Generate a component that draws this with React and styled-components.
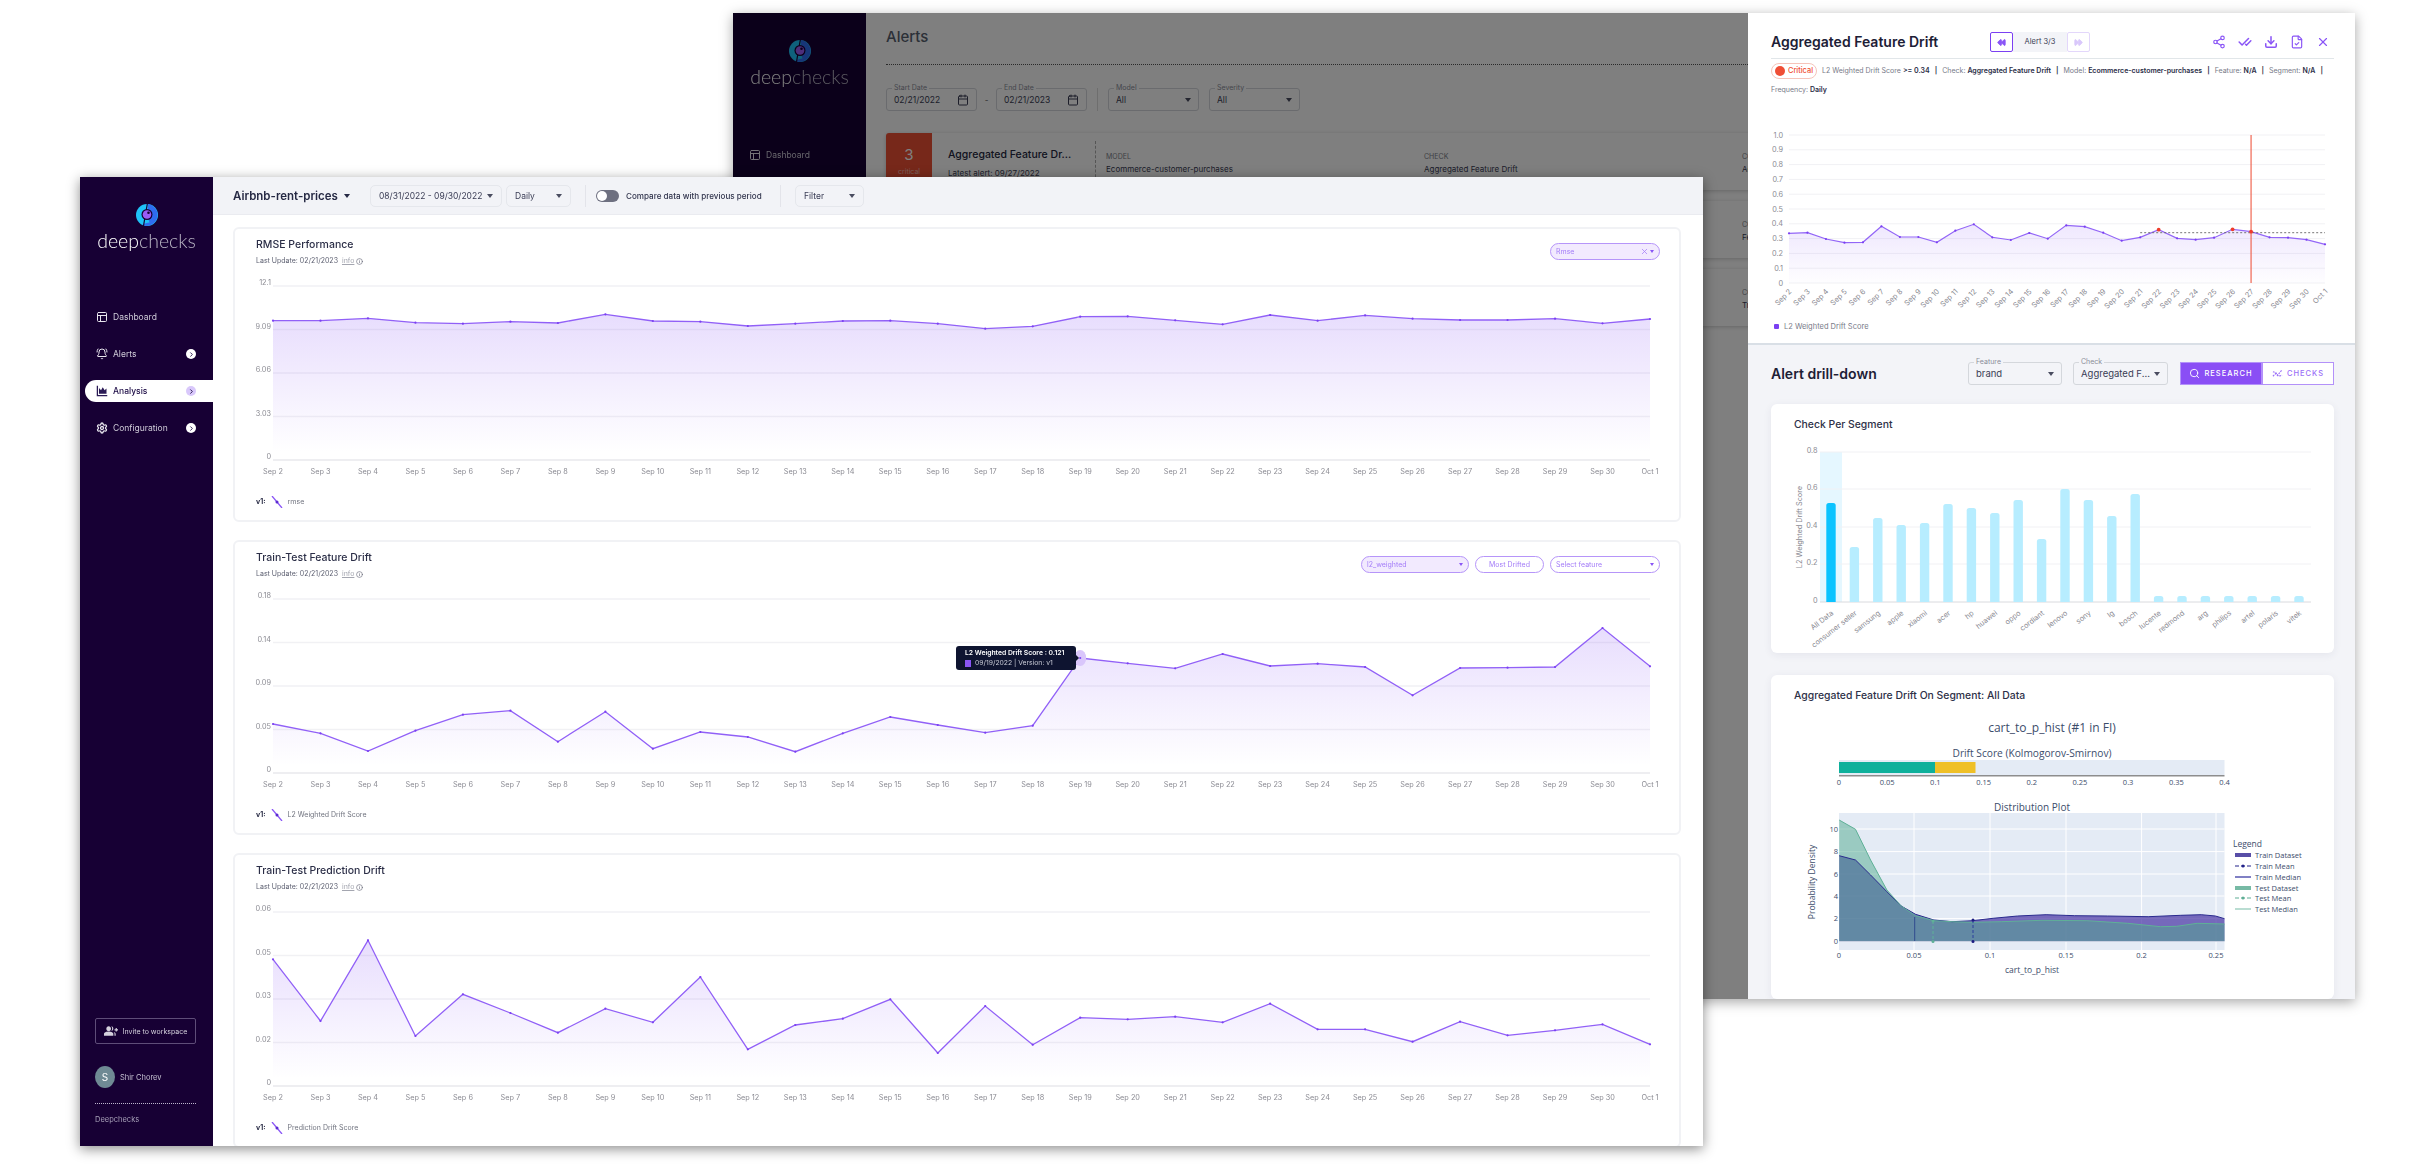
import React from "react";
import styled, { createGlobalStyle } from "styled-components";
import {
  BellRing,
  Calendar,
  CheckCheck,
  ChevronRight,
  Download,
  FastForward,
  FileCheck,
  Info,
  PanelsTopLeft,
  Rewind,
  Search,
  Settings,
  Share2,
  X,
} from "lucide-react";
import { MdGroupAdd } from "react-icons/md";

const PURPLE = "#8a55f6";
const DAYS = Array.from({ length: 29 }, (_, i) => `Sep ${i + 2}`).concat("Oct 1");

// y of each point, in px below the top of the plot
const RMSE = [34.7, 34.7, 32.3, 36.7, 37.7, 35.7, 37, 28.3, 35, 35.7, 40, 37.7, 35, 34.7, 37.7, 42.7, 40.3, 30.7, 30.3, 34.3, 38.3, 29, 34.7, 29.3, 32.7, 34, 34, 32.7, 37.3, 33];
const FEATURE_DRIFT = [125, 134.3, 152, 131.7, 115.7, 111.7, 142.7, 112.7, 149.7, 133, 138, 152.7, 134.3, 118, 126, 133.7, 126.7, 59, 64.3, 69.3, 55, 67, 64.7, 68, 96.3, 69, 68.7, 68, 29, 67.3];
const PREDICTION_DRIFT = [47.3, 109, 28.3, 124, 82.3, 101, 120.7, 96.7, 110.3, 65, 137.3, 113, 106.7, 87.3, 141, 94, 132.7, 105.7, 107.3, 104.7, 110.3, 91.7, 117.3, 117.3, 129.7, 109.7, 123.3, 118.3, 112.3, 132.3];
const ALERT_SERIES = [98.3, 97.7, 104, 107.7, 107.3, 91.3, 102, 102, 107.3, 95.7, 89.3, 102.3, 105, 98, 103.7, 90.3, 91.7, 97.7, 105.7, 102.3, 94.7, 103.3, 104.7, 102.7, 94.3, 96.7, 102.3, 102.7, 104.7, 109.3];

const SEGMENTS = [
  ["All Data", 99], ["consumer seller", 55], ["samsung", 84], ["apple", 77], ["xiaomi", 79], ["acer", 98], ["hp", 94],
  ["huawei", 89], ["oppo", 102], ["cordiant", 63], ["lenovo", 113], ["sony", 102], ["lg", 86], ["bosch", 108],
  ["lucente", 6], ["redmond", 6], ["arg", 6], ["philips", 6], ["artel", 6], ["polaris", 6], ["vitek", 6],
];

const GlobalStyle = createGlobalStyle`
  html, body { margin: 0; background: #fff; }
  * { box-sizing: border-box; }
  body { font-family: Inter, "Liberation Sans", sans-serif; }
`;

const Page = styled.div`
  position: relative;
  width: 2416px;
  height: 1173px;
  overflow: hidden;
  background: #fff;
`;

const BackWindow = styled.div`
  position: absolute;
  left: 733px;
  top: 13px;
  width: 1622px;
  height: 986px;
  display: flex;
  filter: blur(0.4px);
  box-shadow: 0 3px 12px rgba(0, 0, 0, 0.35);
`;

const FrontWindow = styled.div`
  position: absolute;
  left: 80px;
  top: 177px;
  width: 1623px;
  height: 969px;
  display: flex;
  overflow: hidden;
  filter: blur(0.4px);
  box-shadow: 0 3px 12px rgba(0, 0, 0, 0.45);
`;

/* sidebar */
const Side = styled.aside`
  width: 133px;
  flex-shrink: 0;
  height: 100%;
  background: #170034;
  display: flex;
  flex-direction: column;
  align-items: center;
  padding-top: 26px;
`;

const Wordmark = styled.div`
  margin-top: 1px;
  font-family: Lato, sans-serif;
  font-size: 19.5px;
  line-height: 26px;
  font-weight: 300;
  color: #fff;
  span { color: #b9b5c4; }
`;

const Nav = styled.nav`
  align-self: stretch;
  margin-top: ${(p) => p.$top}px;
  padding-left: 5px;
  display: flex;
  flex-direction: column;
  gap: 15px;
`;

const NavItem = styled.div`
  height: 22px;
  padding: 0 17px 0 11px;
  display: flex;
  align-items: center;
  gap: 5px;
  border-radius: 11px 0 0 11px;
  font-size: 8.5px;
  color: ${(p) => (p.$active ? "#1b0a44" : "#cfcbd8")};
  background: ${(p) => (p.$active ? "#fff" : "transparent")};
  font-weight: ${(p) => (p.$active ? 500 : 400)};
  svg.main { color: ${(p) => (p.$active ? "#2a1a55" : "#e8e6ee")}; flex-shrink: 0; }
`;

const NavLabel = styled.span`
  flex: 1;
`;

const Chevron = styled.span`
  width: 10px;
  height: 10px;
  border-radius: 50%;
  display: flex;
  align-items: center;
  justify-content: center;
  color: #1b0a44;
  background: ${(p) => (p.$active ? "#d9c8fb" : "#fff")};
`;

const SideFoot = styled.div`
  margin-top: auto;
  align-self: stretch;
  padding: 0 17px 22px 15px;
`;

const InviteButton = styled.div`
  height: 26px;
  display: flex;
  align-items: center;
  justify-content: center;
  gap: 5px;
  border: 1px solid #5e4d78;
  border-radius: 2px;
  color: #d6d2de;
  font-size: 7px;
`;

const UserRow = styled.div`
  margin-top: 22px;
  display: flex;
  align-items: center;
  gap: 5px;
  font-size: 7.5px;
  color: #c4bfd0;
`;

const Avatar = styled.div`
  width: 20px;
  height: 22px;
  border-radius: 50%;
  background: #6f8a94;
  color: #fff;
  font-size: 10px;
  display: flex;
  align-items: center;
  justify-content: center;
`;

const Org = styled.div`
  margin-top: 15px;
  padding-top: 11px;
  border-top: 1px dotted #bdb6cc;
  font-size: 7.5px;
  color: #a79fb8;
`;

const Logo = () => (
  <svg width="24" height="24" viewBox="0 0 24 24">
    <circle cx="12" cy="12" r="11" fill="#1fc3f8" />
    <path d="M13 1.1A11 11 0 0 1 12 23c-2 0-3.4-.5-4.6-1.2C10 20 12 20 14.5 19.5L13 15z" fill="#2f6cf0" />
    <path d="M12.5 0 L10 14 L8.5 23" stroke="#170034" strokeWidth="1.2" fill="none" />
    <circle cx="12" cy="11.5" r="5.5" fill="#170034" />
    <circle cx="12" cy="11.5" r="4.3" fill="#9a5cf7" />
    <circle cx="13.5" cy="9.8" r="1.3" fill="#170034" />
  </svg>
);

const AnalysisIcon = () => (
  <svg className="main" width="12" height="12" viewBox="0 0 16 16" fill="currentColor">
    <path d="M1 1v14h14v-1.700H2.700V1z" />
    <path d="M4 11.500V4l2.700 3L9 3l2.500 4L14 4.500v7z" />
  </svg>
);

const Sidebar = ({ navTop = 52, full = true }) => (
  <Side>
    <Logo />
    <Wordmark>
      deep<span>checks</span>
    </Wordmark>
    <Nav $top={navTop}>
      <NavItem>
        <PanelsTopLeft className="main" size={12} />
        <NavLabel>Dashboard</NavLabel>
      </NavItem>
      <NavItem>
        <BellRing className="main" size={12} />
        <NavLabel>Alerts</NavLabel>
        <Chevron><ChevronRight size={7} strokeWidth={3} /></Chevron>
      </NavItem>
      <NavItem $active>
        <AnalysisIcon />
        <NavLabel>Analysis</NavLabel>
        <Chevron $active><ChevronRight size={7} strokeWidth={3} /></Chevron>
      </NavItem>
      <NavItem>
        <Settings className="main" size={12} strokeWidth={2.6} />
        <NavLabel>Configuration</NavLabel>
        <Chevron><ChevronRight size={7} strokeWidth={3} /></Chevron>
      </NavItem>
    </Nav>
    {full && (
      <SideFoot>
        <InviteButton>
          <MdGroupAdd size={14} />
          Invite to workspace
        </InviteButton>
        <UserRow>
          <Avatar>S</Avatar>
          Shir Chorev
        </UserRow>
        <Org>Deepchecks</Org>
      </SideFoot>
    )}
  </Side>
);

/* alerts page behind the drawer */
const AlertsApp = styled.div`
  position: relative;
  flex: 1;
  display: flex;
  overflow: hidden;
`;

const Dim = styled.div`
  position: absolute;
  inset: 0;
  background: rgba(0, 0, 0, 0.5);
`;

const AlertsMain = styled.main`
  flex: 1;
  min-width: 0;
  background: #fff;
  padding-left: 20px;
  overflow: hidden;
`;

const AlertsTitle = styled.h1`
  margin: 0;
  height: 52px;
  padding-top: 14px;
  font-size: 15px;
  line-height: 20px;
  font-weight: 500;
  color: #57606f;
  border-bottom: 1px dotted #555;
`;

const AlertsFilters = styled.div`
  margin-top: 23px;
  height: 23px;
  display: flex;
  align-items: center;
`;

const Outlined = styled.div`
  position: relative;
  width: ${(p) => p.$w}px;
  height: 23px;
  margin-left: ${(p) => p.$ml || 0}px;
  padding: 0 7px;
  display: flex;
  align-items: center;
  justify-content: space-between;
  border: 1.5px solid #d4d7dc;
  border-radius: 3px;
  font-size: ${(p) => p.$fs || 8.5}px;
  color: #3a3d55;
`;

const Notch = styled.label`
  position: absolute;
  left: 5px;
  top: -6px;
  padding: 0 2px;
  font-size: 7px;
  line-height: 9px;
  color: #8a8d99;
  background: ${(p) => p.$bg || "#fff"};
`;

const Caret = styled.i`
  width: 0;
  height: 0;
  flex-shrink: 0;
  border-left: ${(p) => p.$s || 3}px solid transparent;
  border-right: ${(p) => p.$s || 3}px solid transparent;
  border-top: ${(p) => (p.$s || 3) + 1}px solid ${(p) => p.$c || "#4a4d60"};
`;

const FilterDash = styled.span`
  margin: 0 6px;
  width: 7px;
  text-align: center;
  font-size: 8px;
  color: #555;
`;

const FilterRule = styled.span`
  width: 1px;
  height: 23px;
  margin: 0 10px;
  background: #ddd;
`;

const AlertRows = styled.div`
  margin-top: 22px;
  display: flex;
  flex-direction: column;
  gap: 11px;
`;

const AlertRow = styled.div`
  width: 1200px;
  height: 57px;
  display: grid;
  grid-template-columns: 46px 164px 318px 318px 318px;
  border-radius: 3px;
  background: #fff;
  box-shadow: 0 1px 4px rgba(0, 0, 0, 0.2);
`;

const SeverityBlock = styled.div`
  background: #ee5035;
  color: #fff;
  border-radius: 3px 0 0 3px;
  display: flex;
  flex-direction: column;
  align-items: center;
  padding-top: 12px;
  font-size: 15px;
  line-height: 20px;
  small { margin-top: 1px; font-size: 7px; line-height: 12px; color: #f6bcb1; }
`;

const RowTitle = styled.div`
  margin: 8px 0;
  padding: 4px 0 0 16px;
  border-right: 1px dashed #aaa;
  font-size: 10.5px;
  line-height: 20px;
  font-weight: 500;
  white-space: nowrap;
  color: #24273f;
  small { display: block; margin-top: 2px; font-size: 8px; line-height: 12px; font-weight: 400; color: #3a3d55; }
`;

const RowCell = styled.div`
  padding: 18px 0 0 10px;
  font-size: 8px;
  line-height: 12px;
  color: #3a3d55;
  small { display: block; font-size: 7px; color: #7b7e8a; }
`;

const ALERT_ROWS = ["Aggregated Feature Drift", "Feature Drift", "Train-Test Drift"];

const AlertsBehind = () => (
  <AlertsApp>
    <Sidebar navTop={54} full={false} />
    <AlertsMain>
      <AlertsTitle>Alerts</AlertsTitle>
      <AlertsFilters>
        <Outlined $w={91}>
          <Notch>Start Date</Notch>
          02/21/2022
          <Calendar size={12} />
        </Outlined>
        <FilterDash>-</FilterDash>
        <Outlined $w={91}>
          <Notch>End Date</Notch>
          02/21/2023
          <Calendar size={12} />
        </Outlined>
        <FilterRule />
        <Outlined $w={91}>
          <Notch>Model</Notch>
          All
          <Caret />
        </Outlined>
        <Outlined $w={91} $ml={10}>
          <Notch>Severity</Notch>
          All
          <Caret />
        </Outlined>
      </AlertsFilters>
      <AlertRows>
        {ALERT_ROWS.map((check, i) => (
          <AlertRow key={i}>
            <SeverityBlock>
              3<small>critical</small>
            </SeverityBlock>
            <RowTitle>
              Aggregated Feature Dr...
              <small>Latest alert: 09/27/2022</small>
            </RowTitle>
            <RowCell>
              <small>MODEL</small>
              Ecommerce-customer-purchases
            </RowCell>
            <RowCell>
              <small>CHECK</small>
              Aggregated Feature Drift
            </RowCell>
            <RowCell>
              <small>CONDITION</small>
              {check}
            </RowCell>
          </AlertRow>
        ))}
      </AlertRows>
    </AlertsMain>
    <Dim />
  </AlertsApp>
);

/* drawer */
const Drawer = styled.section`
  width: 607px;
  flex-shrink: 0;
  height: 100%;
  overflow: hidden;
  display: flex;
  flex-direction: column;
  background: #f3f4f8;
`;

const DrawerTop = styled.div`
  height: 332px;
  flex-shrink: 0;
  padding: 19px 21px 0 23px;
  background: #fff;
  border-bottom: 2px solid #d9dfe6;
`;

const DrawerHead = styled.div`
  display: grid;
  grid-template-columns: 219px auto 1fr;
  align-items: center;
  padding-bottom: 6px;
  border-bottom: 1.5px solid #e1e6e9;
`;

const DrawerTitle = styled.h2`
  margin: 0;
  font-size: 14px;
  line-height: 20px;
  font-weight: 600;
  white-space: nowrap;
  color: #1d2036;
`;

const Pager = styled.div`
  display: flex;
  height: 20px;
`;

const PagerButton = styled.div`
  width: 23px;
  display: flex;
  align-items: center;
  justify-content: center;
  border: 1.5px solid ${(p) => (p.$on ? "#7b40f2" : "#e3d7fb")};
  border-radius: 2px;
  color: ${(p) => (p.$on ? "#8a55f6" : "#d9c8fb")};
`;

const PagerLabel = styled.div`
  width: 54px;
  text-align: center;
  font-size: 7.5px;
  line-height: 20px;
  color: #3a3d55;
  background: #f3f4f8;
`;

const DrawerTools = styled.div`
  justify-self: end;
  padding-right: 4px;
  display: flex;
  gap: 12px;
  color: ${PURPLE};
`;

const InfoLine = styled.div`
  margin-top: 4px;
  display: flex;
  flex-wrap: wrap;
  align-items: center;
  column-gap: 5px;
  font-size: 7px;
  line-height: 16px;
  white-space: nowrap;
  color: #777a88;
  b { font-weight: 600; color: #2b2e47; }
`;

const CriticalPill = styled.span`
  height: 16px;
  display: flex;
  align-items: center;
  gap: 3px;
  padding: 0 3px;
  border: 1px solid #f6c4ba;
  border-radius: 8px;
  color: #ef4e35;
  font-size: 7.4px;
  font-weight: 500;
`;

const CriticalDot = styled.i`
  width: 10px;
  height: 10px;
  border-radius: 50%;
  background: #ef4e35;
`;

const Pipe = styled.span`
  color: #2b2e47;
  font-weight: 600;
`;

const Break = styled.span`
  flex-basis: 100%;
  height: 3px;
`;

const AlertLegend = styled.div`
  margin-top: 10px;
  display: flex;
  align-items: center;
  gap: 5px;
  padding-left: 3px;
  font-size: 7.5px;
  color: #777a88;
`;

const AlertLegendDot = styled.i`
  width: 5px;
  height: 5px;
  border-radius: 1px;
  background: #7b40f2;
`;

const DrawerBody = styled.div`
  flex: 1;
  min-height: 0;
  padding: 17px 21px 0 23px;
`;

const DrillHead = styled.div`
  display: flex;
  align-items: center;
  height: 23px;
`;

const DrillTitle = styled.h3`
  margin: 0;
  flex: 1;
  font-size: 14px;
  font-weight: 600;
  color: #1d2036;
`;

const Segmented = styled.div`
  margin-left: 12px;
  display: flex;
  height: 23px;
  width: 154px;
`;

const SegButton = styled.div`
  flex: ${(p) => (p.$on ? "0 0 82px" : 1)};
  display: flex;
  align-items: center;
  justify-content: center;
  gap: 4px;
  font-size: 7.5px;
  font-weight: 500;
  letter-spacing: 1px;
  color: ${(p) => (p.$on ? "#fff" : "#9a6ef7")};
  background: ${(p) => (p.$on ? "#8a4ef5" : "#fff")};
  border: 1px solid #b391f9;
`;

const PanelCard = styled.div`
  margin-top: ${(p) => p.$mt}px;
  padding-top: 14px;
  background: #fff;
  border-radius: 6px;
  box-shadow: 0 2px 8px rgba(40, 40, 80, 0.07);
`;

const PanelTitle = styled.h4`
  margin: 0 0 3px 23px;
  font-size: 10.4px;
  line-height: 14px;
  font-weight: 500;
  color: #2d3047;
`;

const Svg = styled.svg`
  display: block;
  overflow: visible;
`;

const ChartSpacer = styled.div`
  height: 22px;
`;

const GridLine = styled.line`
  stroke: ${(p) => p.$c || "#f1f1f4"};
  stroke-width: ${(p) => p.$w || 1.3};
`;

const Tick = styled.text`
  font-family: Inter, sans-serif;
  font-size: 7.3px;
  fill: #8b8b93;
`;

const PlotText = styled.text`
  font-family: "Open Sans", sans-serif;
  font-size: ${(p) => p.$fs || 7.5}px;
  fill: #3c4d6b;
`;

const linePath = (ys, x0, step) => ys.map((y, i) => `${i ? "L" : "M"}${(x0 + i * step).toFixed(1)} ${y}`).join(" ");

const AlertChart = () => {
  const x0 = 18;
  const step = 536 / 29;
  const top = 15;
  const h = 148;
  const ys = ALERT_SERIES.map((y) => y + top);
  return (
    <Svg width="563" height="192">
      <defs>
        <linearGradient id="alertFill" x1="0" y1="0" x2="0" y2="1">
          <stop offset="0" stopColor="#8a55f6" stopOpacity="0.14" />
          <stop offset="1" stopColor="#8a55f6" stopOpacity="0.01" />
        </linearGradient>
      </defs>
      {Array.from({ length: 11 }, (_, i) => {
        const y = top + (h * i) / 10;
        return (
          <g key={i}>
            <GridLine x1={x0} x2={x0 + 536} y1={y} y2={y} $w={1} />
            <Tick x={x0 - 6} y={y + 2.5} textAnchor="end">
              {i === 10 ? "0" : (1 - i / 10).toFixed(1)}
            </Tick>
          </g>
        );
      })}
      <path d={`${linePath(ys, x0, step)} L${x0 + 536} ${top + h} L${x0} ${top + h} Z`} fill="url(#alertFill)" />
      <path d={linePath(ys, x0, step)} fill="none" stroke="#9366f7" strokeWidth="1.2" />
      <line x1={x0 + 19 * step} x2={x0 + 536} y1={top + 97.7} y2={top + 97.7} stroke="#666" strokeWidth="0.9" strokeDasharray="2 2" />
      <line x1={x0 + 25 * step} x2={x0 + 25 * step} y1={top} y2={top + h} stroke="#ef5a43" strokeWidth="1.1" />
      {ys.map((y, i) =>
        [20, 24, 25].includes(i) ? (
          <circle key={i} cx={x0 + i * step} cy={y} r="1.9" fill="#ef3b2a" />
        ) : (
          <circle key={i} cx={x0 + i * step} cy={y} r="1.1" fill="#7b40f2" />
        )
      )}
      {DAYS.map((d, i) => (
        <Tick key={d} x={x0 + i * step + 3} y={top + h + 9} textAnchor="end" transform={`rotate(-45 ${x0 + i * step + 3} ${top + h + 9})`}>
          {d}
        </Tick>
      ))}
    </Svg>
  );
};

const SegmentChart = () => {
  const base = 602;
  const ticks = [[452, "0.8"], [489, "0.6"], [527, "0.4"], [564, "0.2"], [602, "0"]];
  return (
    <Svg width="563" height="218" viewBox="1771 435 563 218">
      <rect x="1820" y="452" width="22" height="150" fill="#e5f7ff" />
      {ticks.map(([y, label]) => (
        <g key={label}>
          <GridLine x1="1820" x2="2311" y1={y} y2={y} $w={1} $c={label === "0" ? "#d9dade" : "#f1f1f4"} />
          <Tick x="1817.5" y={y + 1} textAnchor="end">{label}</Tick>
        </g>
      ))}
      <Tick x="1802" y="527" textAnchor="middle" transform="rotate(-90 1802 527)">L2 Weighted Drift Score</Tick>
      {SEGMENTS.map(([name, height], i) => {
        const x = 1831 + i * 23.4;
        return (
          <g key={name}>
            <path
              d={`M${x - 4.7} ${base} v${-(height - 2.5)} q0 -2.5 2.5 -2.5 h4.4 q2.5 0 2.5 2.5 v${height - 2.5} z`}
              fill={i === 0 ? "#0cc3ff" : "#b7edff"}
            />
            <Tick x={x + 3} y={base + 12} textAnchor="end" transform={`rotate(-38 ${x + 3} ${base + 12})`}>{name}</Tick>
          </g>
        );
      })}
    </Svg>
  );
};

// curves read off the plot, [x, y] in a frame of 2.45 x 3 per page px
const pt = ([x, y]) => `${(1740 + x / 2.45).toFixed(1)} ${(670 + y / 3).toFixed(1)}`;
const TRAIN = [[243, 557], [283, 570], [320, 615], [360, 665], [395, 708], [430, 733], [475, 750], [520, 755], [570, 752], [620, 745], [680, 738], [750, 734], [820, 737], [900, 738], [1000, 740], [1080, 736], [1130, 734], [1165, 738], [1187, 746]];
const TEST = [[243, 450], [283, 478], [320, 570], [360, 660], [395, 708], [430, 737], [475, 752], [520, 755], [570, 757], [640, 755], [740, 751], [850, 752], [950, 760], [1030, 770], [1070, 769], [1120, 760], [1187, 762]];
const curve = (list) => list.map((p, i) => `${i ? "L" : "M"}${pt(p)}`).join(" ");
const closed = (list) => `${curve(list)} L${pt([1187, 814])} L${pt([243, 814])} Z`;

const LEGEND_ROWS = [
  ["Train Dataset", 855, "band", "#3b2f98"],
  ["Train Mean", 866, "dash", "#23238a"],
  ["Train Median", 877, "line", "#2b2a9c"],
  ["Test Dataset", 888, "band", "#5fae95"],
  ["Test Mean", 898, "dash", "#5fae95"],
  ["Test Median", 909, "line", "#8cc7b4"],
];

const DriftPlot = () => (
  <Svg width="563" height="293" viewBox="1771 706 563 293">
    <PlotText x="2052" y="732" textAnchor="middle" $fs={12}>cart_to_p_hist (#1 in FI)</PlotText>
    <PlotText x="2032" y="757" textAnchor="middle" $fs={10.2}>Drift Score (Kolmogorov-Smirnov)</PlotText>
    <rect x="1839" y="760" width="385.5" height="15" fill="#e4ebf5" />
    <rect x="1839" y="762" width="96" height="11" fill="#0eb09b" />
    <rect x="1935" y="762" width="40.5" height="11" fill="#efc027" />
    <rect x="1839" y="775" width="385.5" height="1.5" fill="#8d8d8d" />
    {["0", "0.05", "0.1", "0.15", "0.2", "0.25", "0.3", "0.35", "0.4"].map((t, i) => (
      <PlotText key={t} x={1839 + i * 48.19} y="785" textAnchor="middle">{t}</PlotText>
    ))}
    <PlotText x="2032" y="811" textAnchor="middle" $fs={10}>Distribution Plot</PlotText>
    <rect x="1839" y="813" width="385.5" height="137" fill="#e4ebf5" />
    {[829, 851.6, 874, 896, 918.6, 941.3].map((y) => (
      <line key={y} x1="1839" x2="2224.5" y1={y} y2={y} stroke="#fff" strokeWidth="1" />
    ))}
    {[1914, 1990, 2066, 2141.6, 2216].map((x) => (
      <line key={x} x1={x} x2={x} y1="813" y2="950" stroke="#fff" strokeWidth="1" />
    ))}
    <path d={closed(TRAIN)} fill="#4a36a5" fillOpacity="0.72" />
    <path d={closed(TEST)} fill="#4fa98d" fillOpacity="0.5" />
    <path d={curve(TRAIN)} fill="none" stroke="#2a2a8e" strokeWidth="1" />
    <path d={curve(TEST)} fill="none" stroke="#5fb197" strokeWidth="1" />
    <line x1="1914.7" x2="1914.7" y1="917" y2="941" stroke="#2f4a8e" strokeWidth="1" />
    <line x1="1933" x2="1933" y1="921" y2="941" stroke="#5fb197" strokeWidth="1" strokeDasharray="3 2" />
    <circle cx="1933" cy="921" r="1.5" fill="#5fb197" />
    <circle cx="1933" cy="941.5" r="1.5" fill="#5fb197" />
    <line x1="1973" x2="1973" y1="920" y2="941" stroke="#2a3f9e" strokeWidth="1" strokeDasharray="3 2" />
    <circle cx="1973" cy="920" r="1.5" fill="#1c1c80" />
    <circle cx="1973" cy="941.5" r="1.5" fill="#1c1c80" />
    {[["10", 829], ["8", 851.6], ["6", 874], ["4", 896], ["2", 918.6], ["0", 941.3]].map(([t, y]) => (
      <PlotText key={t} x="1838" y={y + 2.5} textAnchor="end">{t}</PlotText>
    ))}
    {[["0", 1839], ["0.05", 1914], ["0.1", 1990], ["0.15", 2066], ["0.2", 2141.6], ["0.25", 2216]].map(([t, x]) => (
      <PlotText key={t} x={x} y="958" textAnchor="middle">{t}</PlotText>
    ))}
    <PlotText x="2032" y="973" textAnchor="middle" $fs={8.5}>cart_to_p_hist</PlotText>
    <PlotText x="1815" y="882" textAnchor="middle" $fs={8.5} transform="rotate(-90 1815 882)">Probability Density</PlotText>
    <PlotText x="2233" y="847" $fs={8.5}>Legend</PlotText>
    {LEGEND_ROWS.map(([label, y, kind, color]) => (
      <g key={label}>
        {kind === "band" && <rect x="2235" y={y - 2} width="16" height="4" fill={color} fillOpacity="0.85" />}
        {kind === "line" && <line x1="2235" x2="2251" y1={y} y2={y} stroke={color} strokeWidth="1.2" />}
        {kind === "dash" && (
          <>
            <line x1="2235" x2="2251" y1={y} y2={y} stroke={color} strokeWidth="1.2" strokeDasharray="4 2" />
            <circle cx="2243" cy={y} r="1.5" fill={color} />
          </>
        )}
        <PlotText x="2255" y={y + 2.5}>{label}</PlotText>
      </g>
    ))}
  </Svg>
);

const AlertDrawer = () => (
  <Drawer>
    <DrawerTop>
      <DrawerHead>
        <DrawerTitle>Aggregated Feature Drift</DrawerTitle>
        <Pager>
          <PagerButton $on><Rewind size={9} fill="currentColor" /></PagerButton>
          <PagerLabel>Alert 3/3</PagerLabel>
          <PagerButton><FastForward size={9} fill="currentColor" /></PagerButton>
        </Pager>
        <DrawerTools>
          <Share2 size={14} />
          <CheckCheck size={14} strokeWidth={2.6} />
          <Download size={14} strokeWidth={2.6} />
          <FileCheck size={14} />
          <X size={14} />
        </DrawerTools>
      </DrawerHead>
      <InfoLine>
        <CriticalPill><CriticalDot />Critical</CriticalPill>
        <span>L2 Weighted Drift Score <b>&gt;= 0.34</b></span>
        <Pipe>|</Pipe>
        <span>Check: <b>Aggregated Feature Drift</b></span>
        <Pipe>|</Pipe>
        <span>Model: <b>Ecommerce-customer-purchases</b></span>
        <Pipe>|</Pipe>
        <span>Feature: <b>N/A</b></span>
        <Pipe>|</Pipe>
        <span>Segment: <b>N/A</b></span>
        <Pipe>|</Pipe>
        <Break />
        <span>Frequency: <b>Daily</b></span>
      </InfoLine>
      <ChartSpacer />
      <AlertChart />
      <AlertLegend><AlertLegendDot />L2 Weighted Drift Score</AlertLegend>
    </DrawerTop>
    <DrawerBody>
      <DrillHead>
        <DrillTitle>Alert drill-down</DrillTitle>
        <Outlined $w={94} $fs={9.5}>
          <Notch $bg="#f3f4f8">Feature</Notch>
          brand
          <Caret />
        </Outlined>
        <Outlined $w={95} $ml={11} $fs={9.5}>
          <Notch $bg="#f3f4f8">Check</Notch>
          Aggregated F...
          <Caret />
        </Outlined>
        <Segmented>
          <SegButton $on><Search size={11} />RESEARCH</SegButton>
          <SegButton>
            <svg width="11" height="11" viewBox="0 0 12 12" fill="none" stroke="currentColor" strokeWidth="1.2" strokeDasharray="2 1">
              <path d="M1 9l3-3 2 2 5-6" />
              <path d="M1 4l3 1 3 4 4-1" />
            </svg>
            CHECKS
          </SegButton>
        </Segmented>
      </DrillHead>
      <PanelCard $mt={19}>
        <PanelTitle>Check Per Segment</PanelTitle>
        <SegmentChart />
      </PanelCard>
      <PanelCard $mt={22}>
        <PanelTitle>Aggregated Feature Drift On Segment: All Data</PanelTitle>
        <DriftPlot />
      </PanelCard>
    </DrawerBody>
  </Drawer>
);

/* analysis page in front */
const AnalysisMain = styled.main`
  flex: 1;
  min-width: 0;
  display: flex;
  flex-direction: column;
  background: #fff;
`;

const TopBar = styled.header`
  height: 38px;
  flex-shrink: 0;
  padding-left: 20px;
  display: flex;
  align-items: center;
  background: #f2f3f7;
  border-bottom: 1px solid #eaebf0;
`;

const ModelName = styled.div`
  width: 137px;
  display: flex;
  align-items: center;
  gap: 6px;
  font-size: 11.5px;
  font-weight: 600;
  color: #262944;
`;

const BarSelect = styled.div`
  width: ${(p) => p.$w}px;
  height: 22px;
  margin-left: ${(p) => p.$ml || 0}px;
  padding: 0 8px;
  display: flex;
  align-items: center;
  justify-content: space-between;
  border: 1px solid #e5e7ec;
  border-radius: 5px;
  font-size: 8.5px;
  color: #3a3d55;
`;

const BarRule = styled.span`
  width: 1px;
  height: 22px;
  margin: 0 ${(p) => p.$r}px 0 ${(p) => p.$l}px;
  background: #e3e4ea;
`;

const Toggle = styled.div`
  position: relative;
  width: 23px;
  height: 12px;
  border-radius: 6px;
  background: #6e7080;
`;

const Knob = styled.i`
  position: absolute;
  left: 1px;
  top: 1px;
  width: 10px;
  height: 10px;
  border-radius: 50%;
  background: #fff;
`;

const CompareLabel = styled.span`
  margin-left: 7px;
  width: 137px;
  font-size: 8.1px;
  font-weight: 500;
  white-space: nowrap;
  color: #30334c;
`;

const Cards = styled.div`
  padding: 12px 22px 0 20px;
  display: flex;
  flex-direction: column;
  gap: 18px;
`;

const MetricCard = styled.article`
  height: 295px;
  flex-shrink: 0;
  padding: 8px 19px 0 21px;
  border: 2px solid #f1f2f5;
  border-radius: 6px;
`;

const CardHead = styled.div`
  display: flex;
  justify-content: space-between;
  align-items: flex-start;
  height: 31px;
`;

const CardTitle = styled.h3`
  margin: 0;
  font-size: 10.5px;
  line-height: 16px;
  font-weight: 500;
  color: #2b2e47;
`;

const CardSub = styled.div`
  margin-top: 1px;
  display: flex;
  align-items: center;
  gap: 4px;
  font-size: 7px;
  line-height: 14px;
  color: #5e6172;
  u { color: #a4a6b0; margin-right: -2px; }
`;

const CardControls = styled.div`
  margin-top: 6px;
  display: flex;
  gap: 6px;
`;

const PillSelect = styled.div`
  width: ${(p) => p.$w}px;
  height: 17px;
  padding: 0 5px;
  display: flex;
  align-items: center;
  justify-content: ${(p) => (p.$center ? "center" : "space-between")};
  border: 1.5px solid #b695f9;
  border-radius: 9px;
  font-size: 7px;
  color: #a47df8;
  background: ${(p) => (p.$filled ? "#f2eafe" : "#fff")};
`;

const ClearRow = styled.span`
  display: flex;
  align-items: center;
  gap: 1px;
`;

const ChartBox = styled.div`
  position: relative;
`;

const Tooltip = styled.div`
  position: absolute;
  left: 700px;
  top: 65px;
  width: 120px;
  height: 24px;
  padding: 2px 5px 0 9px;
  border-radius: 3px;
  background: #0e1430;
  color: #fff;
  font-size: 6.8px;
  line-height: 10px;
  font-weight: 600;
  white-space: nowrap;
  &::after {
    content: "";
    position: absolute;
    right: -3px;
    top: 9px;
    border-top: 3px solid transparent;
    border-bottom: 3px solid transparent;
    border-left: 3px solid #0e1430;
  }
`;

const TooltipRow = styled.div`
  display: flex;
  align-items: center;
  gap: 4px;
  font-weight: 400;
  color: #c9cbd6;
  i { width: 6px; height: 7px; background: #8a55f6; }
`;

const Legend = styled.div`
  margin-top: 13px;
  display: flex;
  align-items: center;
  gap: 5px;
  font-size: 7px;
  line-height: 14px;
  color: #70737f;
  b { font-weight: 700; color: #2b2e47; }
`;

const AreaChart = ({ id, ticks, data, hover }) => {
  const x0 = 17;
  const w = 1377;
  const top = 18;
  const h = 174;
  const step = w / 29;
  const ys = data.map((y) => y + top);
  return (
    <Svg width="1410" height="214">
      <defs>
        <linearGradient id={id} x1="0" y1="0" x2="0" y2="1">
          <stop offset="0" stopColor="#8a55f6" stopOpacity="0.2" />
          <stop offset="0.95" stopColor="#8a55f6" stopOpacity="0" />
        </linearGradient>
      </defs>
      {ticks.map((label, i) => {
        const y = top + (h * i) / (ticks.length - 1);
        return (
          <g key={label}>
            <GridLine x1={x0} x2={x0 + w} y1={y} y2={y} $c={i === ticks.length - 1 ? "#e9e9ed" : "#f1f1f4"} />
            <Tick x={x0 - 2} y={y - 1} textAnchor="end">{label}</Tick>
          </g>
        );
      })}
      <path d={`${linePath(ys, x0, step)} L${x0 + w} ${top + h} L${x0} ${top + h} Z`} fill={`url(#${id})`} />
      <path d={linePath(ys, x0, step)} fill="none" stroke="#9160f7" strokeWidth="1.3" />
      {hover != null && <ellipse cx={x0 + hover * step} cy={ys[hover]} rx="6" ry="8" fill="#d9c6fb" />}
      {ys.map((y, i) => (
        <circle key={i} cx={x0 + i * step} cy={y} r="1.1" fill="#7b40f2" />
      ))}
      {DAYS.map((d, i) => (
        <Tick key={d} x={x0 + i * step} y={top + h + 14} textAnchor="middle">{d}</Tick>
      ))}
    </Svg>
  );
};

const LegendMark = () => (
  <svg width="12" height="12" viewBox="0 0 12 12">
    <line x1="1" y1="0" x2="11" y2="12" stroke="#8a55f6" strokeWidth="1.3" />
    <circle cx="6" cy="6" r="1.5" fill="#5b2bd0" />
  </svg>
);

const Metric = ({ id, title, ticks, data, legend, controls, hover, children }) => (
  <MetricCard>
    <CardHead>
      <div>
        <CardTitle>{title}</CardTitle>
        <CardSub>
          Last Update: 02/21/2023 <u>info</u>
          <Info size={7} />
        </CardSub>
      </div>
      <CardControls>{controls}</CardControls>
    </CardHead>
    <ChartBox>
      <AreaChart id={id} ticks={ticks} data={data} hover={hover} />
      {children}
    </ChartBox>
    <Legend>
      <b>v1:</b>
      <LegendMark />
      {legend}
    </Legend>
  </MetricCard>
);

const AnalysisPage = () => (
  <AnalysisMain>
    <TopBar>
      <ModelName>Airbnb-rent-prices <Caret $s={3.5} $c="#262944" /></ModelName>
      <BarSelect $w={132}>08/31/2022 - 09/30/2022 <Caret /></BarSelect>
      <BarSelect $w={65} $ml={4}>Daily <Caret /></BarSelect>
      <BarRule $l={14} $r={10} />
      <Toggle><Knob /></Toggle>
      <CompareLabel>Compare data with previous period</CompareLabel>
      <BarRule $l={17} $r={14} />
      <BarSelect $w={69}>Filter <Caret /></BarSelect>
    </TopBar>
    <Cards>
      <Metric
        id="rmse"
        title="RMSE Performance"
        ticks={["12.1", "9.09", "6.06", "3.03", "0"]}
        data={RMSE}
        legend="rmse"
        controls={
          <PillSelect $w={110} $filled>
            Rmse
            <ClearRow><X size={9} /><Caret $s={2} $c="#8a55f6" /></ClearRow>
          </PillSelect>
        }
      />
      <Metric
        id="featureDrift"
        title="Train-Test Feature Drift"
        ticks={["0.18", "0.14", "0.09", "0.05", "0"]}
        data={FEATURE_DRIFT}
        legend="L2 Weighted Drift Score"
        hover={17}
        controls={
          <>
            <PillSelect $w={108} $filled>l2_weighted <Caret $s={2} $c="#8a55f6" /></PillSelect>
            <PillSelect $w={69} $center>Most Drifted</PillSelect>
            <PillSelect $w={110}>Select feature <Caret $s={2} $c="#8a55f6" /></PillSelect>
          </>
        }
      >
        <Tooltip>
          L2 Weighted Drift Score : 0.121
          <TooltipRow><i />09/19/2022 | Version: v1</TooltipRow>
        </Tooltip>
      </Metric>
      <Metric
        id="predictionDrift"
        title="Train-Test Prediction Drift"
        ticks={["0.06", "0.05", "0.03", "0.02", "0"]}
        data={PREDICTION_DRIFT}
        legend="Prediction Drift Score"
      />
    </Cards>
  </AnalysisMain>
);

export default function App() {
  return (
    <Page>
      <GlobalStyle />
      <BackWindow>
        <AlertsBehind />
        <AlertDrawer />
      </BackWindow>
      <FrontWindow>
        <Sidebar />
        <AnalysisPage />
      </FrontWindow>
    </Page>
  );
}
